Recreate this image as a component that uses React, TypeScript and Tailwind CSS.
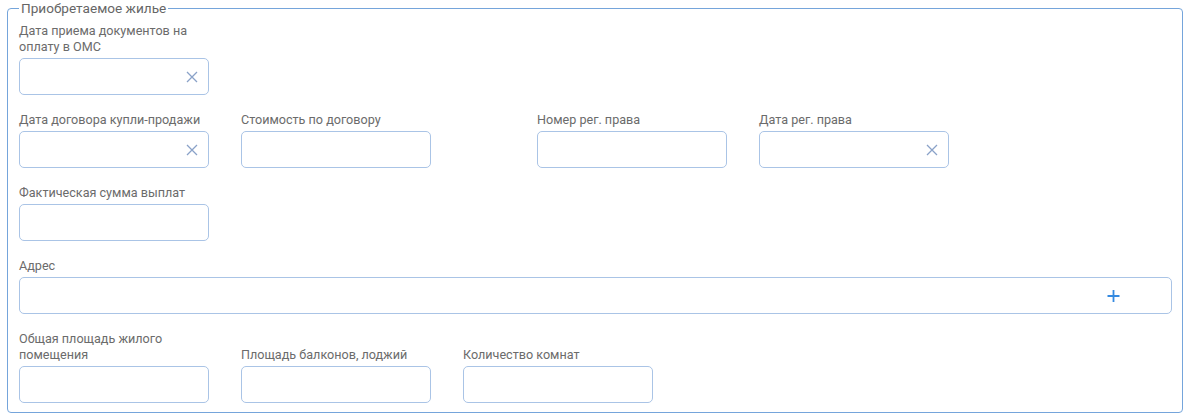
import React from "react";

const font = { fontFamily: "Roboto, 'Liberation Sans', Arial, sans-serif" };

function ClearIcon() {
  return (
    <svg width="12" height="12" viewBox="0 0 12 12" className="absolute right-[10px] top-1/2 -translate-y-1/2">
      <path d="M1 1 L11 11 M11 1 L1 11" stroke="#8aa2c8" strokeWidth="1.3" fill="none" />
    </svg>
  );
}

function Input({ clear = false, className = "w-[190px]" }: { clear?: boolean; className?: string }) {
  return (
    <div className={`relative h-[37px] rounded-[5px] border border-[#aac4e6] bg-white ${className}`}>
      {clear && <ClearIcon />}
    </div>
  );
}

function Field({ label, clear, className = "w-[190px]" }: { label: React.ReactNode; clear?: boolean; className?: string }) {
  return (
    <div className={`flex flex-col justify-end ${className}`}>
      <div className="text-[12.6px] leading-[16px] text-[#6b6b6b] mb-[3px] whitespace-nowrap">{label}</div>
      <Input clear={clear} className="w-full" />
    </div>
  );
}

export default function App() {
  return (
    <div className="bg-white w-[1190px] h-[418px] pl-[7px]" style={font}>
      <fieldset className="w-[1176px] border border-[#75a5db] rounded-[4px] pl-[11px] pr-[10px] pt-[7px] pb-[9px]">
        <legend className="px-[2px] text-[13.6px] leading-[16px] text-[#666]">Приобретаемое жилье</legend>
        <div className="flex flex-col gap-[17px]">
          <div className="flex">
            <Field label={<>Дата приема документов на<br />оплату в ОМС</>} clear />
          </div>
          <div className="flex">
            <Field label="Дата договора купли-продажи" clear />
            <Field label="Стоимость по договору" className="w-[190px] ml-[32px]" />
            <Field label="Номер рег. права" className="w-[190px] ml-[106px]" />
            <Field label="Дата рег. права" clear className="w-[190px] ml-[32px]" />
          </div>
          <div className="flex">
            <Field label="Фактическая сумма выплат" />
          </div>
          <div className="flex flex-col">
            <div className="text-[12.6px] leading-[16px] text-[#6b6b6b] mb-[3px]">Адрес</div>
            <div className="relative h-[37px] rounded-[5px] border border-[#aac4e6] bg-white w-[1153px]">
              <svg width="13" height="13" viewBox="0 0 13 13" className="absolute left-[1087px] top-1/2 -translate-y-1/2">
                <path d="M6.5 0.5 V12.5 M0.5 6.5 H12.5" stroke="#358ae0" strokeWidth="1.8" fill="none" />
              </svg>
            </div>
          </div>
          <div className="flex">
            <Field label={<>Общая площадь жилого<br />помещения</>} />
            <Field label="Площадь балконов, лоджий" className="w-[190px] ml-[32px]" />
            <Field label="Количество комнат" className="w-[190px] ml-[32px]" />
          </div>
        </div>
      </fieldset>
    </div>
  );
}
